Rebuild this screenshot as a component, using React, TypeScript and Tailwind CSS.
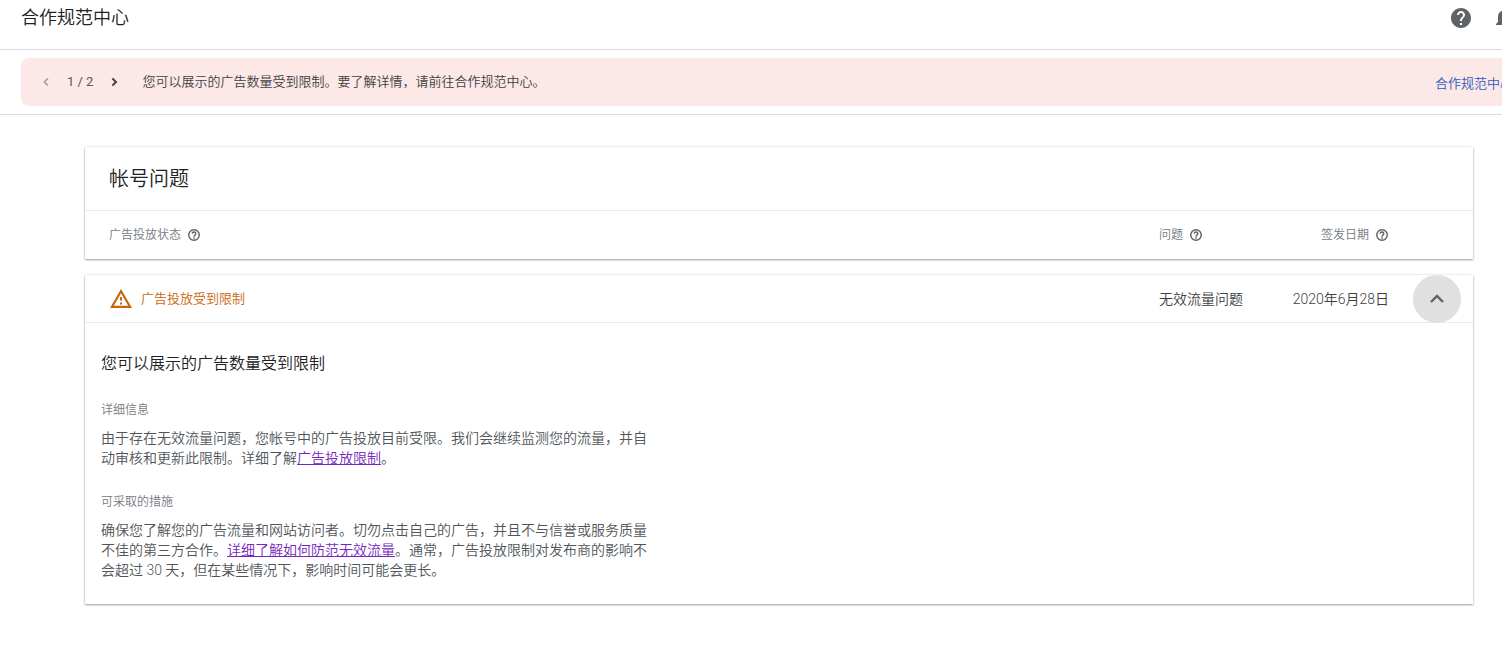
import type { ReactNode } from "react";
import { MdHelp, MdNotifications } from "react-icons/md";

function TopBar() {
  return (
    <header className="flex h-[50px] items-start justify-between border-b border-[#dadce0] pl-[21px] pt-1">
      <h1 className="text-lg leading-7 text-[#202124]">合作规范中心</h1>
      <div className="-mr-[14px] flex gap-[19px] pt-0.5 text-[#5f6368]">
        <button type="button" aria-label="帮助">
          <MdHelp size={24} />
        </button>
        <button type="button" aria-label="通知">
          <MdNotifications size={24} />
        </button>
      </div>
    </header>
  );
}

function Chevron({ d, className }: { d: string; className: string }) {
  return (
    <svg viewBox="0 0 24 24" className={className} fill="none" stroke="currentColor" aria-hidden="true">
      <path d={d} />
    </svg>
  );
}

function Banner() {
  return (
    <div className="border-b border-[#dadce0] py-2 pl-[21px]">
      <div className="-mr-8 flex h-12 items-center rounded-lg bg-[#fce8e6] pl-[17px] pr-[21px] text-[13px] text-[#3c4043]">
        <button type="button" aria-label="上一条" disabled className="text-[#b0a4a5]">
          <Chevron d="M15 6.5 9.5 12l5.5 5.5" className="size-4 stroke-[2.6]" />
        </button>
        <span className="mx-[13px] font-normal text-[#5f5354]">1 / 2</span>
        <button type="button" aria-label="下一条">
          <Chevron d="M9.5 6.5 15 12l-5.5 5.5" className="size-4 stroke-[3]" />
        </button>
        <p className="ml-5 flex-1">您可以展示的广告数量受到限制。要了解详情，请前往合作规范中心。</p>
        <a href="#policy" className="pt-1 text-[#3058c0]">合作规范中心</a>
      </div>
    </div>
  );
}

function WarningIcon() {
  return (
    <svg viewBox="0 0 24 24" className="size-6" fill="currentColor" aria-hidden="true">
      <path fillRule="evenodd" d="M12 2 1 21h22L12 2Zm0 4.2L19.2 18.7H4.8L12 6.2Z" />
      <path d="M11 10h2v3.5h-2zM11 15.5h2v2h-2z" />
    </svg>
  );
}

function HelpOutline() {
  return (
    <svg viewBox="0 0 24 24" className="size-[14px] text-[#5f6368]" fill="none" stroke="currentColor" strokeWidth="2.5" aria-hidden="true">
      <circle cx="12" cy="12" r="9" />
      <path d="M9 10a3 3 0 1 1 6 0c0 2-3 2.300-3 5" />
      <path d="M12 16v2.300" />
    </svg>
  );
}

function ColumnLabel({ children }: { children: ReactNode }) {
  return (
    <span className="inline-flex items-center gap-1.5">
      {children}
      <HelpOutline />
    </span>
  );
}

function Section({ title, children }: { title: string; children: ReactNode }) {
  return (
    <section className="mt-6">
      <h4 className="text-xs leading-5 text-[#757a80]">{title}</h4>
      <p className="mt-2 text-sm leading-5 text-[#50555a]">{children}</p>
    </section>
  );
}

const card = "bg-white shadow-[0_1px_2px_rgba(0,0,0,0.35),0_0_2px_rgba(0,0,0,0.15)]";

export default function App() {
  return (
    <div className="overflow-hidden bg-white pb-12 font-['Roboto','Noto_Sans_CJK_SC',sans-serif] font-[350]">
      <TopBar />
      <Banner />
      <main className="flex flex-col gap-4 pl-[85px] pr-[29px] pt-8">
        <div className={card}>
          <h2 className="border-b border-[#e8eaed] px-6 pb-[17px] pt-[18px] text-xl leading-7 text-[#202124]">帐号问题</h2>
          <div className="flex h-12 items-center pl-6 pr-[84px] text-xs text-[#757a80]">
            <div className="flex-1">
              <ColumnLabel>广告投放状态</ColumnLabel>
            </div>
            <div className="w-[110px]">
              <ColumnLabel>问题</ColumnLabel>
            </div>
            <div className="w-[120px] text-right">
              <ColumnLabel>签发日期</ColumnLabel>
            </div>
          </div>
        </div>

        <div className={card}>
          <div className="flex h-12 border-b border-[#e8eaed] pl-6 pr-3 text-sm leading-12 text-[#3c4043]">
            <div className="flex flex-1 items-center gap-2 text-[13px] text-[#c8660a]">
              <WarningIcon />
              广告投放受到限制
            </div>
            <div className="w-[110px]">无效流量问题</div>
            <div className="w-[120px] text-right">2020年6月28日</div>
            <button
              type="button"
              aria-label="收起"
              aria-expanded="true"
              className="ml-6 flex size-12 items-center justify-center rounded-full bg-[#e0e0e0] text-[#5f6368]"
            >
              <Chevron d="M6 15l6-6 6 6" className="size-6 stroke-[2.4]" />
            </button>
          </div>
          <div className="max-w-[586px] px-4 pb-6 pt-[29px]">
            <h3 className="text-base text-[#202124]">您可以展示的广告数量受到限制</h3>
            <Section title="详细信息">
              由于存在无效流量问题，您帐号中的广告投放目前受限。我们会继续监测您的流量，并自动审核和更新此限制。详细了解<a href="#limits" className="text-[#7627bb] underline">广告投放限制</a>。
            </Section>
            <Section title="可采取的措施">
              确保您了解您的广告流量和网站访问者。切勿点击自己的广告，并且不与信誉或服务质量不佳的第三方合作。<a href="#prevent" className="text-[#7627bb] underline">详细了解如何防范无效流量</a>。通常，广告投放限制对发布商的影响不会超过 30 天，但在某些情况下，影响时间可能会更长。
            </Section>
          </div>
        </div>
      </main>
    </div>
  );
}
